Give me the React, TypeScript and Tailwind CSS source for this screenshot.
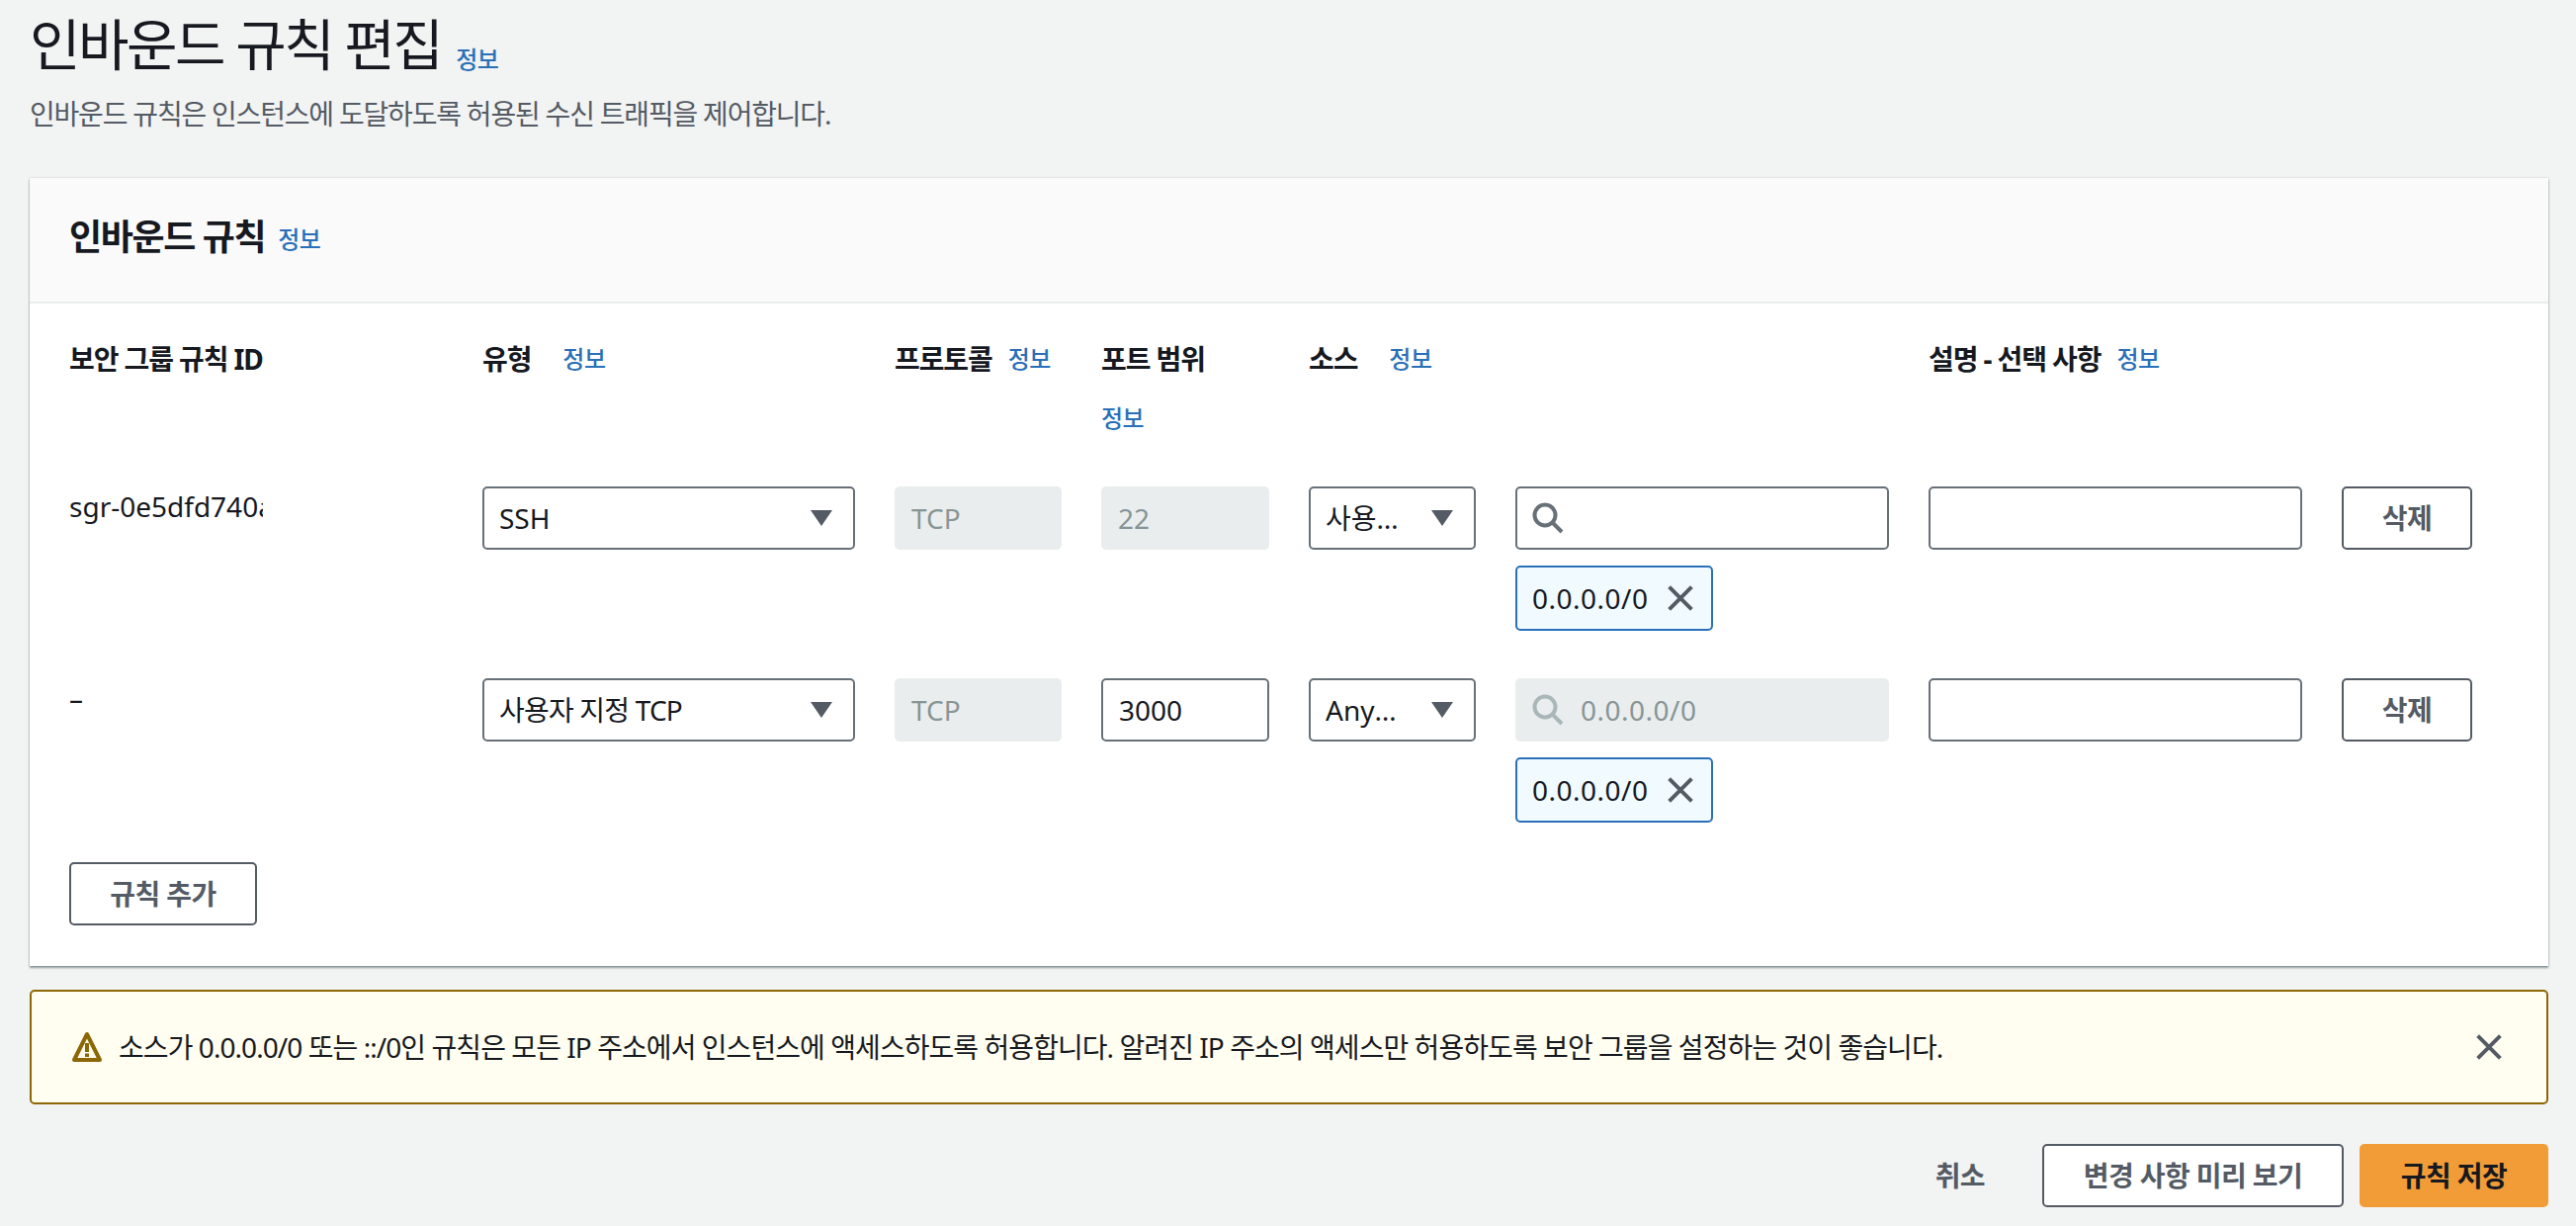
import React from "react";

const fieldClass = "h-16 rounded-[5px] border-2 border-[#687078] bg-white";

function Info({ className = "" }: { className?: string }) {
  return <a className={`text-[24px] leading-10 font-medium tracking-[-0.5px] text-[#2a70b8] ${className}`}>정보</a>;
}

function HeaderLabel({ children }: { children: React.ReactNode }) {
  return <span className="text-[28px] leading-10 font-bold tracking-[-1.1px] text-[#16191f]">{children}</span>;
}

function CloseIcon({ className = "" }: { className?: string }) {
  return (
    <svg viewBox="0 0 32 32" className={className} fill="none" stroke="#545b64" strokeWidth="4.5">
      <path d="M3 3l26 26M29 3L3 29" />
    </svg>
  );
}

function SearchIcon({ color }: { color: string }) {
  return (
    <svg viewBox="0 0 32 32" className="h-8 w-8 shrink-0" fill="none" stroke={color} strokeWidth="4">
      <circle cx="13" cy="13" r="10.5" />
      <path d="M20.5 20.5L30 30" />
    </svg>
  );
}

function Select({ label, tight }: { label: string; tight?: boolean }) {
  return (
    <div className={`${fieldClass} flex w-full items-center pr-[21px] pl-[15px]`}>
      <span className={`min-w-0 flex-1 truncate text-[28px] leading-10 text-[#16191f] ${tight ? "tracking-[-0.8px]" : ""}`}>{label}</span>
      <svg viewBox="0 0 22 16" className="ml-6 h-4 w-[22px] shrink-0" fill="#545b64">
        <path d="M0 0h22L11 16z" />
      </svg>
    </div>
  );
}

function Disabled({ value }: { value: string }) {
  return (
    <div className="flex h-16 items-center rounded-[5px] bg-[#eaeded] px-[17px] text-[28px] text-[#879596]">{value}</div>
  );
}

function Chip() {
  return (
    <div className="mt-4 flex h-[66px] w-[200px] items-center rounded-[5px] border-2 border-[#2a70b8] bg-[#f1faff] pl-[15px] text-[28px] text-[#16191f]">
      <span className="tracking-[0.5px]">0.0.0.0/0</span>
      <CloseIcon className="ml-[18px] h-7 w-7" />
    </div>
  );
}

function OutlineButton({ children, className = "" }: { children: React.ReactNode; className?: string }) {
  return (
    <button className={`flex h-16 items-center justify-center rounded-[5px] border-2 border-[#545b64] bg-white text-[28px] font-bold tracking-[-0.6px] text-[#545b64] ${className}`}>
      {children}
    </button>
  );
}

function RuleRow({ id, type, port, source, sourceValue, tight }: { id: string; type: string; port?: string; source: string; sourceValue?: string; tight?: boolean }) {
  return (
    <>
      <div className="w-[196px] overflow-hidden text-[28px] leading-10 whitespace-nowrap text-[#16191f]">{id}</div>
      <Select label={type} tight={tight} />
      <Disabled value="TCP" />
      {port ? (
        <div className={`${fieldClass} flex items-center px-[16px] text-[28px] text-[#16191f]`}>{port}</div>
      ) : (
        <Disabled value="22" />
      )}
      <Select label={source} />
      <div>
        {sourceValue ? (
          <div className="flex h-16 items-center gap-[17px] rounded-[5px] bg-[#eaeded] pl-[17px] text-[28px] text-[#879596]">
            <SearchIcon color="#aab7b8" />
            <span className="tracking-[0.5px]">{sourceValue}</span>
          </div>
        ) : (
          <div className={`${fieldClass} flex items-center pl-[15px]`}>
            <SearchIcon color="#687078" />
          </div>
        )}
        <Chip />
      </div>
      <div className={fieldClass} />
      <OutlineButton>삭제</OutlineButton>
    </>
  );
}

export default function App() {
  return (
    <div className="h-[1240px] w-[2606px] overflow-hidden bg-[#f2f3f3] pr-[28px] pl-[30px] font-['Noto_Sans','Noto_Sans_CJK_KR',sans-serif] text-[#16191f]">
      <div className="flex h-[88px] items-end pb-1">
        <h1 className="text-[56px] leading-[80px] font-normal tracking-[-2.5px]">인바운드 규칙 편집</h1>
        <Info className="mb-1 ml-[15px]" />
      </div>
      <p className="mt-[7px] text-[28px] leading-10 tracking-[-1.2px] text-[#545b64]">인바운드 규칙은 인스턴스에 도달하도록 허용된 수신 트래픽을 제어합니다.</p>

      <section className="mt-[45px] bg-white shadow-[0_2px_2px_rgba(0,28,36,0.4),0_0_2px_rgba(0,28,36,0.2)]">
        <div className="flex h-[127px] items-center border-b-2 border-[#eaeded] bg-[#fafafa] px-10 pb-[6px]">
          <h2 className="text-[36px] font-bold tracking-[-1.4px]">인바운드 규칙</h2>
          <Info className="mt-[5px] ml-[13px]" />
        </div>

        <div className="px-10 pt-[36px] pb-[41px]">
          <div className="grid grid-cols-[378px_377px_169px_170px_169px_378px_378px_132px] gap-x-10 gap-y-12">
            <HeaderLabel>보안 그룹 규칙 ID</HeaderLabel>
            <div className="flex gap-8">
              <HeaderLabel>유형</HeaderLabel>
              <Info />
            </div>
            <div className="flex gap-4 whitespace-nowrap">
              <HeaderLabel>프로토콜</HeaderLabel>
              <Info />
            </div>
            <div className="flex h-[101px] flex-col gap-[20px]">
              <HeaderLabel>포트 범위</HeaderLabel>
              <Info />
            </div>
            <div className="flex gap-8">
              <HeaderLabel>소스</HeaderLabel>
              <Info />
            </div>
            <div />
            <div className="flex gap-4 whitespace-nowrap">
              <HeaderLabel>설명 - 선택 사항</HeaderLabel>
              <Info />
            </div>
            <div />

            <RuleRow id="sgr-0e5dfd740a1b2c3d4" type="SSH" source="사용자 지정" />
            <RuleRow id="–" type="사용자 지정 TCP" tight port="3000" source="Anywhere-IPv4" sourceValue="0.0.0.0/0" />
          </div>

          <OutlineButton className="mt-10 w-[190px]">규칙 추가</OutlineButton>
        </div>
      </section>

      <div className="mt-6 flex h-[116px] items-center rounded-[5px] border-2 border-[#8d6605] bg-[#fffef0] pr-[44px] pl-[40px]">
        <svg viewBox="0 0 32 32" className="h-8 w-8 shrink-0" fill="none" stroke="#8d6605" strokeWidth="4">
          <path d="M16 3L3 29h26z" strokeLinejoin="round" />
          <path d="M16 12v9M16 22.5v3.5" />
        </svg>
        <p className="ml-[16px] flex-1 text-[28px] tracking-[-0.94px] text-[#16191f]">
          소스가 0.0.0.0/0 또는 ::/0인 규칙은 모든 IP 주소에서 인스턴스에 액세스하도록 허용합니다. 알려진 IP 주소의 액세스만 허용하도록 보안 그룹을 설정하는 것이 좋습니다.
        </p>
        <CloseIcon className="h-7 w-7" />
      </div>

      <div className="mt-10 flex items-center justify-end">
        <span className="mr-[58px] text-[28px] font-bold tracking-[-0.6px] text-[#545b64]">취소</span>
        <OutlineButton className="w-[305px]">변경 사항 미리 보기</OutlineButton>
        <button className="ml-4 h-16 w-[191px] rounded-[5px] bg-[#f29c38] text-[28px] font-bold tracking-[-0.6px] text-[#16191f]">규칙 저장</button>
      </div>
    </div>
  );
}
